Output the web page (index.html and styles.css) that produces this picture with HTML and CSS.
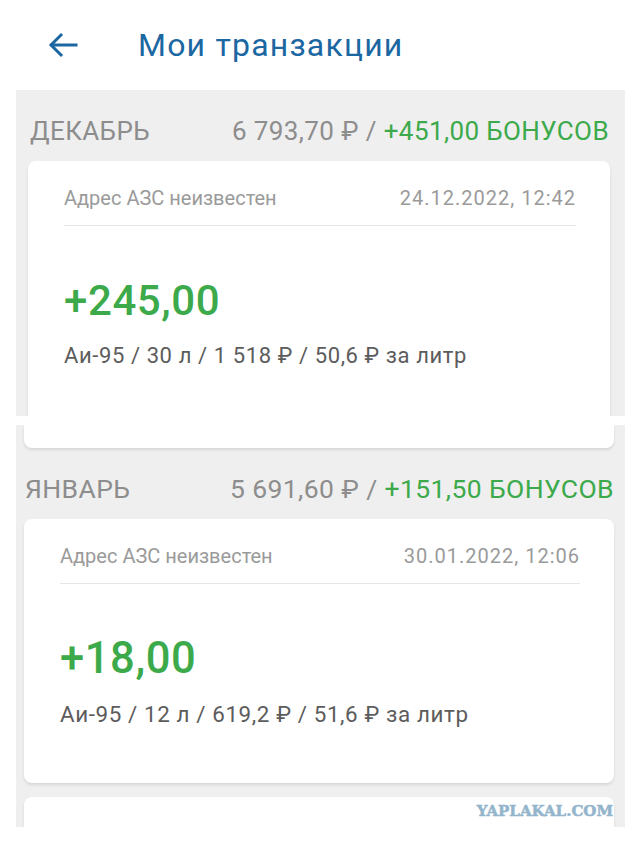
FILE: index.html
```html
<!DOCTYPE html>
<html lang="ru">
<head>
  <meta charset="UTF-8">
  <meta name="viewport" content="width=device-width, initial-scale=1.0">
  <title>Мои транзакции</title>
  <link rel="stylesheet" href="styles.css">
</head>
<body>
  <header class="topbar">
    <span class="back">
      <svg width="30" height="26" viewBox="0 0 30 26" fill="none" stroke="currentColor" stroke-width="3" stroke-linecap="square">
        <path d="M28 13H4"/>
        <path d="M13 3L3 13l10 10"/>
      </svg>
    </span>
    <h1>Мои транзакции</h1>
  </header>

  <!-- первый экран -->
  <section class="shot shot-first">
    <div class="month">
      <span class="month-name">Декабрь</span>
      <span class="month-total">6 793,70 ₽ / <b>+451,00 бонусов</b></span>
    </div>
    <div class="card card-long">
      <div class="card-top">
        <span>Адрес АЗС неизвестен</span>
        <span class="date">24.12.2022, 12:42</span>
      </div>
      <div class="amount">+245,00</div>
      <div class="detail">Аи-95 / 30 л / 1 518 ₽ / 50,6 ₽ за литр</div>
    </div>
  </section>

  <!-- второй экран -->
  <section class="shot shot-second">
    <div class="card card-tail"></div>
    <div class="month">
      <span class="month-name">Январь</span>
      <span class="month-total">5 691,60 ₽ / <b>+151,50 бонусов</b></span>
    </div>
    <div class="card card-full">
      <div class="card-top">
        <span>Адрес АЗС неизвестен</span>
        <span class="date">30.01.2022, 12:06</span>
      </div>
      <div class="amount">+18,00</div>
      <div class="detail">Аи-95 / 12 л / 619,2 ₽ / 51,6 ₽ за литр</div>
    </div>
    <div class="card card-next"></div>
    <div class="watermark">YAPLAKAL.COM</div>
  </section>
</body>
</html>
```

FILE: styles.css
```css
body {
  margin: 0;
  background: #fff;
  font-family: Roboto, 'Noto Sans', sans-serif;
}

.topbar {
  height: 90px;
  display: flex;
  align-items: center;
  padding-left: 48px;
  box-sizing: border-box;
}

.back {
  display: flex;
  width: 30px;
  margin-right: 60px;
  color: #1b67a2;
}

h1 {
  margin: 0;
  font-size: 32px;
  font-weight: 400;
  letter-spacing: 1.2px;
  color: #1b67a2;
}

.shot {
  margin: 0 15px 0 16px;
  background: #efefef;
  overflow: hidden;
}

.shot-first {
  height: 326px;
  padding: 0 15px 0 12px;
}

.shot-second {
  position: relative;
  height: 402px;
  margin-top: 9px;
  padding: 0 11px 0 8px;
}

.month {
  height: 71px;
  padding-top: 10px;
  box-sizing: border-box;
  display: flex;
  align-items: center;
  justify-content: space-between;
  font-size: 26px;
  letter-spacing: 0.4px;
  color: #8d8d8d;
  text-transform: uppercase;
}

.shot-first .month {
  padding-left: 2px;
  padding-right: 1px;
}

.shot-second .month {
  padding-left: 1px;
  font-size: 26.5px;
}

.month-total b {
  font-weight: 400;
  color: #3caa4b;
}

.card {
  background: #fff;
  border-radius: 8px;
  padding: 0 34px 0 36px;
  box-shadow: 0 2px 3px rgba(0,0,0,0.1);
}

.card-long {
  height: 300px;
}

.card-tail {
  height: 23px;
  border-radius: 0 0 8px 8px;
}

.card-full {
  height: 264px;
  box-sizing: border-box;
}

.card-next {
  margin-top: 14px;
  height: 80px;
}

.card-top {
  height: 65px;
  padding-top: 10px;
  box-sizing: border-box;
  display: flex;
  align-items: center;
  justify-content: space-between;
  border-bottom: 1px solid #e6e6e6;
  font-size: 20px;
  color: #9a9a9a;
}

.date {
  letter-spacing: 1px;
}

.amount {
  margin-top: 56px;
  font-size: 42px;
  line-height: 38px;
  font-weight: 500;
  letter-spacing: 0.6px;
  color: #3caa4b;
}

.detail {
  margin-top: 24px;
  font-size: 22px;
  line-height: 24px;
  letter-spacing: 0.6px;
  color: #5c5c5c;
}

.shot-second .amount {
  font-size: 43.5px;
}

.shot-second .detail {
  font-size: 22.4px;
}

.watermark {
  position: absolute;
  right: 12px;
  bottom: 7px;
  font-family: 'DejaVu Serif', serif;
  font-weight: bold;
  font-size: 15px;
  color: #93b5cc;
  -webkit-text-stroke: 0.5px #93b5cc;
}
```
